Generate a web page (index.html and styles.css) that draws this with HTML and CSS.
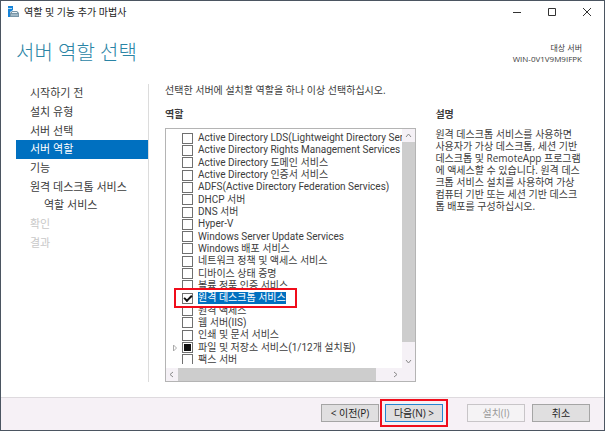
FILE: index.html
```html
<!DOCTYPE html>
<html lang="ko">
<head>
<meta charset="utf-8">
<title>역할 및 기능 추가 마법사</title>
<link rel="stylesheet" href="styles.css">
</head>
<body>
<div class="window">
  <header class="titlebar">
    <svg class="app-icon" width="12" height="12" viewBox="0 0 12 12" aria-hidden="true">
      <path d="M1 0h5v4L3 6v5H1z" fill="#1683d8"/>
      <path d="M1 2.500h4" stroke="#a9dcf9"/>
      <path d="M3 7l2-2h5l2 2v4H3z" fill="#7896a8"/>
      <path d="M5 6.500h5" stroke="#eef4f7"/>
      <path d="M4 9h7" stroke="#c6d8e2"/>
    </svg>
    <span class="titlebar-text">역할 및 기능 추가 마법사</span>
    <div class="controls">
      <button type="button" aria-label="최소화"><svg width="10" height="10" viewBox="0 0 10 10"><path d="M1 5.500h8"/></svg></button>
      <button type="button" aria-label="최대화"><svg width="10" height="10" viewBox="0 0 10 10"><path d="M1.500 1.500h7v7h-7z"/></svg></button>
      <button type="button" aria-label="닫기"><svg width="10" height="10" viewBox="0 0 10 10"><path d="M1 1l8 8M9 1l-8 8"/></svg></button>
    </div>
  </header>

  <div class="heading">
    <h1>서버 역할 선택</h1>
    <p class="target">대상 서버<br>WIN-0V1V9M9IFPK</p>
  </div>

  <div class="body">
    <nav class="steps">
      <ul>
        <li><a href="#">시작하기 전</a></li>
        <li><a href="#">설치 유형</a></li>
        <li><a href="#">서버 선택</a></li>
        <li class="current"><a href="#" aria-current="step">서버 역할</a></li>
        <li><a href="#">기능</a></li>
        <li><a href="#">원격 데스크톱 서비스</a></li>
        <li class="sub"><a href="#">역할 서비스</a></li>
        <li class="disabled"><a>확인</a></li>
        <li class="disabled"><a>결과</a></li>
      </ul>
    </nav>

    <main class="content">
      <p class="prompt">선택한 서버에 설치할 역할을 하나 이상 선택하십시오.</p>
      <div class="columns">
        <section class="roles">
          <h2>역할</h2>
          <div class="listbox">
            <div class="list-view">
              <ul class="role-list">
                <li><label><input type="checkbox"><span>Active Directory LDS(Lightweight Directory Services)</span></label></li>
                <li><label><input type="checkbox"><span>Active Directory Rights Management Services</span></label></li>
                <li><label><input type="checkbox"><span>Active Directory 도메인 서비스</span></label></li>
                <li><label><input type="checkbox"><span>Active Directory 인증서 서비스</span></label></li>
                <li><label><input type="checkbox"><span>ADFS(Active Directory Federation Services)</span></label></li>
                <li><label><input type="checkbox"><span>DHCP 서버</span></label></li>
                <li><label><input type="checkbox"><span>DNS 서버</span></label></li>
                <li><label><input type="checkbox"><span>Hyper-V</span></label></li>
                <li><label><input type="checkbox"><span>Windows Server Update Services</span></label></li>
                <li><label><input type="checkbox"><span>Windows 배포 서비스</span></label></li>
                <li><label><input type="checkbox"><span>네트워크 정책 및 액세스 서비스</span></label></li>
                <li><label><input type="checkbox"><span>디바이스 상태 증명</span></label></li>
                <li><label><input type="checkbox"><span>볼륨 정품 인증 서비스</span></label></li>
                <li class="selected"><label><input type="checkbox" checked><span>원격 데스크톱 서비스</span></label></li>
                <li><label><input type="checkbox"><span>원격 액세스</span></label></li>
                <li><label><input type="checkbox"><span>웹 서버(IIS)</span></label></li>
                <li><label><input type="checkbox"><span>인쇄 및 문서 서비스</span></label></li>
                <li class="expandable"><svg class="expander" width="5" height="8" viewBox="0 0 5 8"><path d="M.5 1l3 3-3 3z"/></svg><label><input type="checkbox" class="partial"><span>파일 및 저장소 서비스(1/12개 설치됨)</span></label></li>
                <li><label><input type="checkbox"><span>팩스 서버</span></label></li>
              </ul>
            </div>
            <div class="vscroll">
              <svg width="13" height="13" viewBox="0 0 13 13"><path d="M4 8l2.500-3L9 8"/></svg>
              <div class="thumb"></div>
              <svg width="13" height="26" viewBox="0 0 13 26"><path d="M4 18l2.500 3L9 18"/></svg>
            </div>
            <div class="hscroll">
              <svg width="12" height="13" viewBox="0 0 12 13"><path d="M7 4L4 6.500 7 9"/></svg>
              <div class="thumb"></div>
              <svg width="39" height="13" viewBox="0 0 39 13"><path d="M18 4l3 2.500L18 9"/></svg>
            </div>
          </div>
        </section>
        <section class="description">
          <h2>설명</h2>
          <p>원격 데스크톱 서비스를 사용하면<br>사용자가 가상 데스크톱, 세션 기반<br>데스크톱 및 RemoteApp 프로그램<br>에 액세스할 수 있습니다. 원격 데스<br>크톱 서비스 설치를 사용하여 가상<br>컴퓨터 기반 또는 세션 기반 데스크<br>톱 배포를 구성하십시오.</p>
        </section>
      </div>
    </main>
  </div>

  <footer class="actions">
    <button type="button">&lt; 이전(P)</button>
    <div class="callout"><button type="button" class="primary">다음(N) &gt;</button></div>
    <button type="button" class="install" disabled>설치(I)</button>
    <button type="button">취소</button>
  </footer>
</div>
</body>
</html>
```
FILE: styles.css
```css
*, *::before { box-sizing: border-box; }

body {
  margin: 0;
  font: 10px/12px "Open Sans", "Noto Sans CJK KR", sans-serif;
  color: #3c3c3c;
}

h1, h2, p, ul { margin: 0; padding: 0; }
ul { list-style: none; }
a { color: inherit; text-decoration: none; }
button { font: inherit; color: inherit; }

.window {
  display: flex;
  flex-direction: column;
  min-height: 100vh;
  border: 1px solid #4b5561;
  background: #fff;
}

.titlebar {
  display: flex;
  align-items: center;
  height: 22px;
  padding: 0 8px 0 6px;
  color: #222;
}
.titlebar-text { margin-left: 5px; }
.controls { display: flex; gap: 16px; margin-left: auto; }
.controls button {
  display: flex;
  justify-content: center;
  width: 19px;
  padding: 0;
  border: 0;
  background: none;
}
.controls path { fill: none; stroke: #333; }

.heading {
  display: flex;
  justify-content: space-between;
  height: 61px;
  padding: 16px 22px 0 15px;
}
h1 {
  font-size: 20px;
  line-height: 28px;
  font-weight: 300;
  color: #2a84a5;
}
.target {
  padding-top: 3px;
  font-size: 8px;
  line-height: 11px;
  text-align: right;
}

.body { display: flex; flex: 1; padding: 0 15px 15px; }

.steps {
  flex: none;
  width: 133px;
  border-right: 1px solid #dcdcdc;
  font-size: 11px;
}
.steps ul { display: grid; grid-auto-rows: 1fr; height: 168px; }
.steps li { display: flex; align-items: center; padding-left: 14px; }
.steps .current { background: #0070c0; color: #fff; }
.steps .sub { padding-left: 28px; }
.steps .disabled { color: #c8c8c8; }

.content {
  display: flex;
  flex-direction: column;
  flex: 1;
  padding-left: 16px;
}
.columns { display: flex; flex: 1; gap: 19px; }
.roles { display: flex; flex-direction: column; flex: 18; min-width: 0; }
.description { flex: 11; min-width: 0; white-space: nowrap; }
h2 { padding: 12px 0 8px; font-size: 10px; line-height: 12px; font-weight: 700; }

.listbox {
  display: grid;
  flex: 1;
  grid-template: 1fr 13px / 1fr 13px;
  border: 1px solid #b4b4b4;
  font-family: Roboto, "Noto Sans CJK KR", sans-serif;
}
.list-view { min-width: 0; overflow: hidden; padding-top: 3px; margin-bottom: 4px; }
.role-list {
  display: grid;
  grid-auto-rows: 1fr;
  height: 234px;
  margin-bottom: -2px;
  white-space: nowrap;
}
.role-list li { position: relative; display: flex; align-items: center; padding-left: 16px; }
.role-list label { display: flex; align-items: center; gap: 5px; }
.role-list input {
  appearance: none;
  display: grid;
  place-items: center;
  width: 11px;
  height: 11px;
  margin: 0;
  border: 1px solid #707070;
  background: #fff;
}
.role-list input:checked::before {
  content: "";
  width: 8px;
  height: 5px;
  border: solid #111;
  border-width: 0 0 2px 2px;
  transform: translateY(-1px) rotate(-45deg);
}
.role-list .partial::before {
  content: "";
  width: 7px;
  height: 7px;
  background: #111;
}
.expander { position: absolute; left: 7px; fill: none; stroke: #aaa; }
.selected { z-index: 1; }
.selected::before {
  content: "";
  position: absolute;
  inset: -4px auto -4px 8px;
  width: 123px;
  border: 2px solid #f00d1b;
  background: #fff;
}
.selected label { position: relative; }
.selected span { background: #0070c0; color: #fff; }

.vscroll, .hscroll { display: flex; background: #f5f1f6; }
.vscroll { flex-direction: column; }
.hscroll { grid-column: 1 / -1; }
.vscroll path, .hscroll path { fill: none; stroke: #8a8a8a; }
.vscroll svg, .hscroll svg { flex: none; }
.thumb { flex: 1; background: #cdcdcd; }

.actions {
  display: flex;
  align-items: center;
  justify-content: flex-end;
  height: 33px;
  padding: 0 14px 2px 0;
  border-top: 1px solid #dedade;
  background: #f6f1f6;
}
.actions button {
  width: 58px;
  height: 18px;
  padding: 0;
  border: 1px solid #a5a5a5;
  background: #e0dfe0;
  line-height: 14px;
  color: #222;
}
.callout {
  margin: 0 19px 0 1px;
  padding: 3px;
  border: 2px solid #f00d1b;
}
.actions .callout button { display: block; border-color: #2684d0; }
.actions .install { margin-right: 7px; border-color: #c8c5c8; background: #f5f3f5; color: #999; }
```
